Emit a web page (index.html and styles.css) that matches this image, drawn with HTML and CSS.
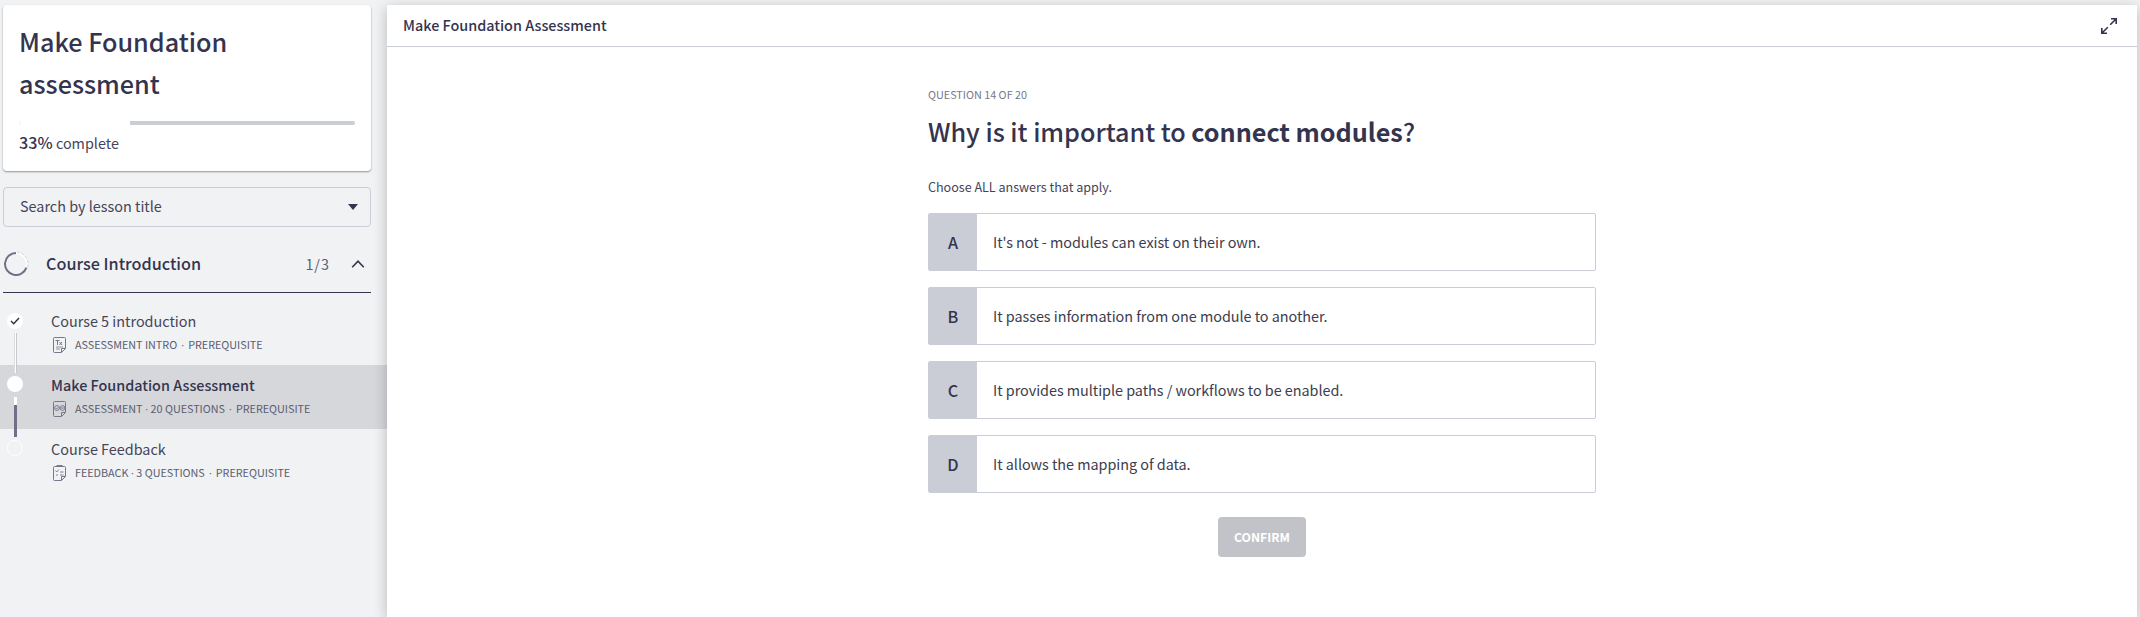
FILE: index.html
```html
<!DOCTYPE html>
<html lang="en">
<head>
<meta charset="utf-8">
<title>Make Foundation Assessment</title>
<link rel="stylesheet" href="styles.css">
</head>
<body>
<div class="app">
  <aside class="sidebar">
    <section class="course-card">
      <h1 class="course-title">Make Foundation<br>assessment</h1>
      <div class="progress"><div class="progress-done"></div></div>
      <p class="progress-label"><strong>33%</strong> <span class="complete">complete</span></p>
    </section>
    <div class="search">
      <span class="search-text">Search by lesson title</span>
      <svg class="caret" width="10" height="6" viewBox="0 0 10 6"><path d="M0 0h10L5 6z" fill="#34344e"/></svg>
    </div>
    <div class="section-head">
      <svg class="ring" width="26" height="26" viewBox="0 0 26 26" fill="none">
        <circle cx="13" cy="13" r="11" stroke="#fff" stroke-width="2"/>
        <path d="M14 1.1A12 12 0 0 1 24.3 17" stroke="#c4c4cc" stroke-width=".8" stroke-dasharray="3 1.5"/>
        <path d="M13 2A11 11 0 1 0 23.4 16.6" stroke="#6f7085" stroke-width="2"/>
      </svg>
      <h2 class="section-title">Course Introduction</h2>
      <span class="section-count">1/3</span>
      <svg class="chevron" width="14" height="8" viewBox="0 0 14 8" fill="none"><path d="M1.2 7.2L7 1.2l5.8 6" stroke="#34344e" stroke-width="1.6"/></svg>
    </div>
    <ul class="lessons">
      <li class="lesson">
        <div class="track">
          <span class="dot"><svg width="10" height="8" viewBox="0 0 10 8" fill="none"><path d="M1 4l2.7 2.7L9 1" stroke="#34343f" stroke-width="1.5"/></svg></span>
          <span class="line line-done"></span>
        </div>
        <div class="lesson-body">
          <h3 class="lesson-title">Course 5 introduction</h3>
          <div class="meta">
            <svg class="doc" width="14" height="16" viewBox="0 0 14 16" fill="none" stroke="#77778c"><path d="M1.5.5h10a1 1 0 0 1 1 1v10l-4 4h-7a1 1 0 0 1-1-1v-13a1 1 0 0 1 1-1zM8.5 15.300v-3.800h4"/><path d="M2.500 3.500h4M4.500 3.500v4.500M6.500 5l2.500 3M9 5l-2.500 3"/><path d="M3 10h7M3 12h4" stroke-width=".8"/></svg>
            <span class="meta-text">ASSESSMENT INTRO<span class="sep sep-wide">·</span>PREREQUISITE</span>
          </div>
        </div>
      </li>
      <li class="lesson current">
        <div class="track">
          <span class="dot"></span>
          <span class="line line-half"></span>
        </div>
        <div class="lesson-body">
          <h3 class="lesson-title">Make Foundation Assessment</h3>
          <div class="meta">
            <svg class="doc" width="14" height="16" viewBox="0 0 14 16" fill="none" stroke="#77778c"><path d="M1.500.5h10a1 1 0 0 1 1 1v10l-4 4h-7a1 1 0 0 1-1-1v-13a1 1 0 0 1 1-1zM8.500 15.300v-3.800h4"/><circle cx="4" cy="7" r="2.400"/><circle cx="9.500" cy="7" r="2.400"/><path d="M2.800 7l1 1 1.500-2M8.500 6l2 2M10.500 6l-2 2" stroke-width=".8"/></svg>
            <span class="meta-text">ASSESSMENT<span class="sep">·</span>20 QUESTIONS<span class="sep sep-wide">·</span>PREREQUISITE</span>
          </div>
        </div>
      </li>
      <li class="lesson">
        <div class="track"><span class="dot dot-empty"></span></div>
        <div class="lesson-body">
          <h3 class="lesson-title">Course Feedback</h3>
          <div class="meta">
            <svg class="doc" width="14" height="16" viewBox="0 0 14 16" fill="none" stroke="#77778c"><path d="M1.500 1.500h10a1 1 0 0 1 1 1v9l-4 4h-7a1 1 0 0 1-1-1v-12a1 1 0 0 1 1-1zM8.500 15.300v-3.800h4"/><path d="M3.500 1h6" stroke-width="2"/><path d="M2.500 5.500l1.300 1.500 2-2.500M7 7h3.500M3 10h2M7 10h3.500" stroke-width=".9"/></svg>
            <span class="meta-text">FEEDBACK<span class="sep">·</span>3 QUESTIONS<span class="sep sep-wide">·</span>PREREQUISITE</span>
          </div>
        </div>
      </li>
    </ul>
  </aside>
  <main class="panel">
    <header class="panel-head">
      <span class="panel-title">Make Foundation Assessment</span>
      <svg width="16" height="16" viewBox="0 0 16 16" fill="none" stroke="#34344e" stroke-width="1.600"><path d="M10 .8h5.200V6M15 1L9.200 6.800M6 15.200H.8V10M1 15l5.800-5.800"/></svg>
    </header>
    <div class="question">
      <p class="counter">QUESTION 14 OF 20</p>
      <h2 class="prompt">Why is it important to <b>connect modules</b>?</h2>
      <p class="hint">Choose ALL answers that apply.</p>
      <div class="options">
        <div class="option"><span class="letter">A</span><span class="answer">It's not - modules can exist on their own.</span></div>
        <div class="option"><span class="letter">B</span><span class="answer">It passes information from one module to another.</span></div>
        <div class="option"><span class="letter">C</span><span class="answer">It provides multiple paths / workflows to be enabled.</span></div>
        <div class="option"><span class="letter">D</span><span class="answer">It allows the mapping of data.</span></div>
      </div>
      <button class="confirm">CONFIRM</button>
    </div>
  </main>
</div>
</body>
</html>
```
FILE: styles.css
```css
* { box-sizing: border-box; margin: 0; padding: 0; }
body {
  background: #f1f2f4;
  color: #34344e;
  font-family: "Noto Sans CJK SC", "Noto Sans CJK JP", sans-serif;
  font-size: 14.4px;
  overflow: hidden;
}
svg { display: block; flex: none; }
ul { list-style: none; }
.app { display: flex; height: 617px; padding: 5px 3px 0 0; }
.sidebar { width: 387px; flex: none; white-space: nowrap; }
.course-card {
  width: 368px;
  height: 166px;
  margin-left: 3px;
  padding: 15px 16px 0;
  background: #fff;
  border-radius: 4px;
  box-shadow: 0 1px 2px rgba(0, 0, 0, .4);
}
.course-title { font-size: 25.2px; line-height: 42px; font-weight: 500; }
.progress { height: 4px; margin-top: 17px; border-radius: 2px; background: #caccd6; overflow: hidden; }
.progress-done { width: 33%; height: 4px; background: #fff; }
.progress-label { margin-top: 5px; line-height: 24px; }
.progress-label strong { font-size: 16.2px; font-weight: 500; }
.complete, .search-text { color: #45455a; }
.search {
  display: flex;
  align-items: center;
  justify-content: space-between;
  width: 368px;
  height: 40px;
  margin: 16px 0 0 3px;
  padding: 0 12px 0 16px;
  border: 1px solid #caccd6;
  border-radius: 4px;
}
.search-text { padding-bottom: 3px; }
.section-head {
  display: flex;
  align-items: center;
  width: 368px;
  height: 66px;
  margin-left: 3px;
  padding-top: 8px;
  border-bottom: 1px solid #34344e;
}
.section-title { flex: 1; margin-left: 17px; padding-bottom: 1px; font-size: 16.2px; font-weight: 500; }
.section-count { margin-right: 21px; color: #5c5c70; letter-spacing: 1px; }
.chevron { margin-right: 6px; }
.lessons { margin-top: 8px; }
.lesson { display: flex; height: 64px; }
.current { background: #d6d7db; }
.track { display: flex; flex-direction: column; align-items: center; width: 30px; padding-top: 12px; }
.current .track { padding-top: 11px; }
.dot {
  display: flex;
  align-items: center;
  justify-content: center;
  flex: none;
  width: 16px;
  height: 16px;
  border-radius: 50%;
  background: #fff;
}
.dot-empty { margin-top: -1px; background: none; border: 1px solid #fff; }
.line { flex: none; width: 3px; height: 40px; margin-top: 4px; background: #fff; }
.line-done { border-right: 1px solid #c8c8cf; border-left: 1px solid #dcdce0; }
.line-half { margin-top: 5px; background: linear-gradient(#fff 8px, #6f7085 8px); }
.lesson-body { padding: 8px 0 0 21px; }
.lesson-title { font-size: 14.4px; line-height: 24px; font-weight: 400; color: #45455a; }
.current .lesson-title { font-weight: 500; color: #34344e; }
.meta { display: flex; align-items: center; height: 24px; margin-left: 1.5px; gap: 8.5px; font-size: 10.8px; color: #5c5c70; }
.meta-text { padding-bottom: 2px; letter-spacing: -.02px; }
.sep { display: inline-flex; justify-content: center; width: 8px; font-family: "Open Sans", sans-serif; }
.sep-wide { width: 11px; }
.panel {
  flex: 1;
  position: relative;
  background: #fff;
  box-shadow: 0 3px 13px rgba(0, 0, 0, .24);
}
.panel-head {
  display: flex;
  align-items: center;
  justify-content: space-between;
  height: 42px;
  padding: 0 20px 0 16px;
  border-bottom: 1px solid #caccd6;
  font-weight: 500;
}
.panel-title { padding-bottom: 2px; }
.question { display: flex; flex-direction: column; width: 668px; margin-left: 541px; padding-top: 37px; white-space: nowrap; }
.counter { font-size: 10.8px; line-height: 20px; color: #77778c; }
.prompt { margin-top: 9px; font-size: 25.2px; line-height: 36px; font-weight: 500; letter-spacing: -.03px; }
.hint { margin-top: 28px; font-size: 12.6px; line-height: 20px; color: #45455a; letter-spacing: -.03px; }
.options { display: grid; gap: 16px; margin-top: 16px; }
.option { display: flex; height: 58px; border: 1px solid #caccd6; border-radius: 2px; }
.letter { display: flex; align-items: center; justify-content: center; width: 48px; padding-bottom: 1px; background: #caccd6; font-size: 16.2px; font-weight: 500; }
.answer { margin-left: 16px; padding-bottom: 2px; align-self: center; color: #3c3c4e; letter-spacing: -.035px; }
.confirm {
  align-self: center;
  width: 88px;
  height: 40px;
  margin-top: 24px;
  padding-bottom: 1px;
  border: 0;
  border-radius: 4px;
  background: #c2c3c8;
  color: #fff;
  font: 700 12.2px "Noto Sans CJK SC", sans-serif;
}
```
